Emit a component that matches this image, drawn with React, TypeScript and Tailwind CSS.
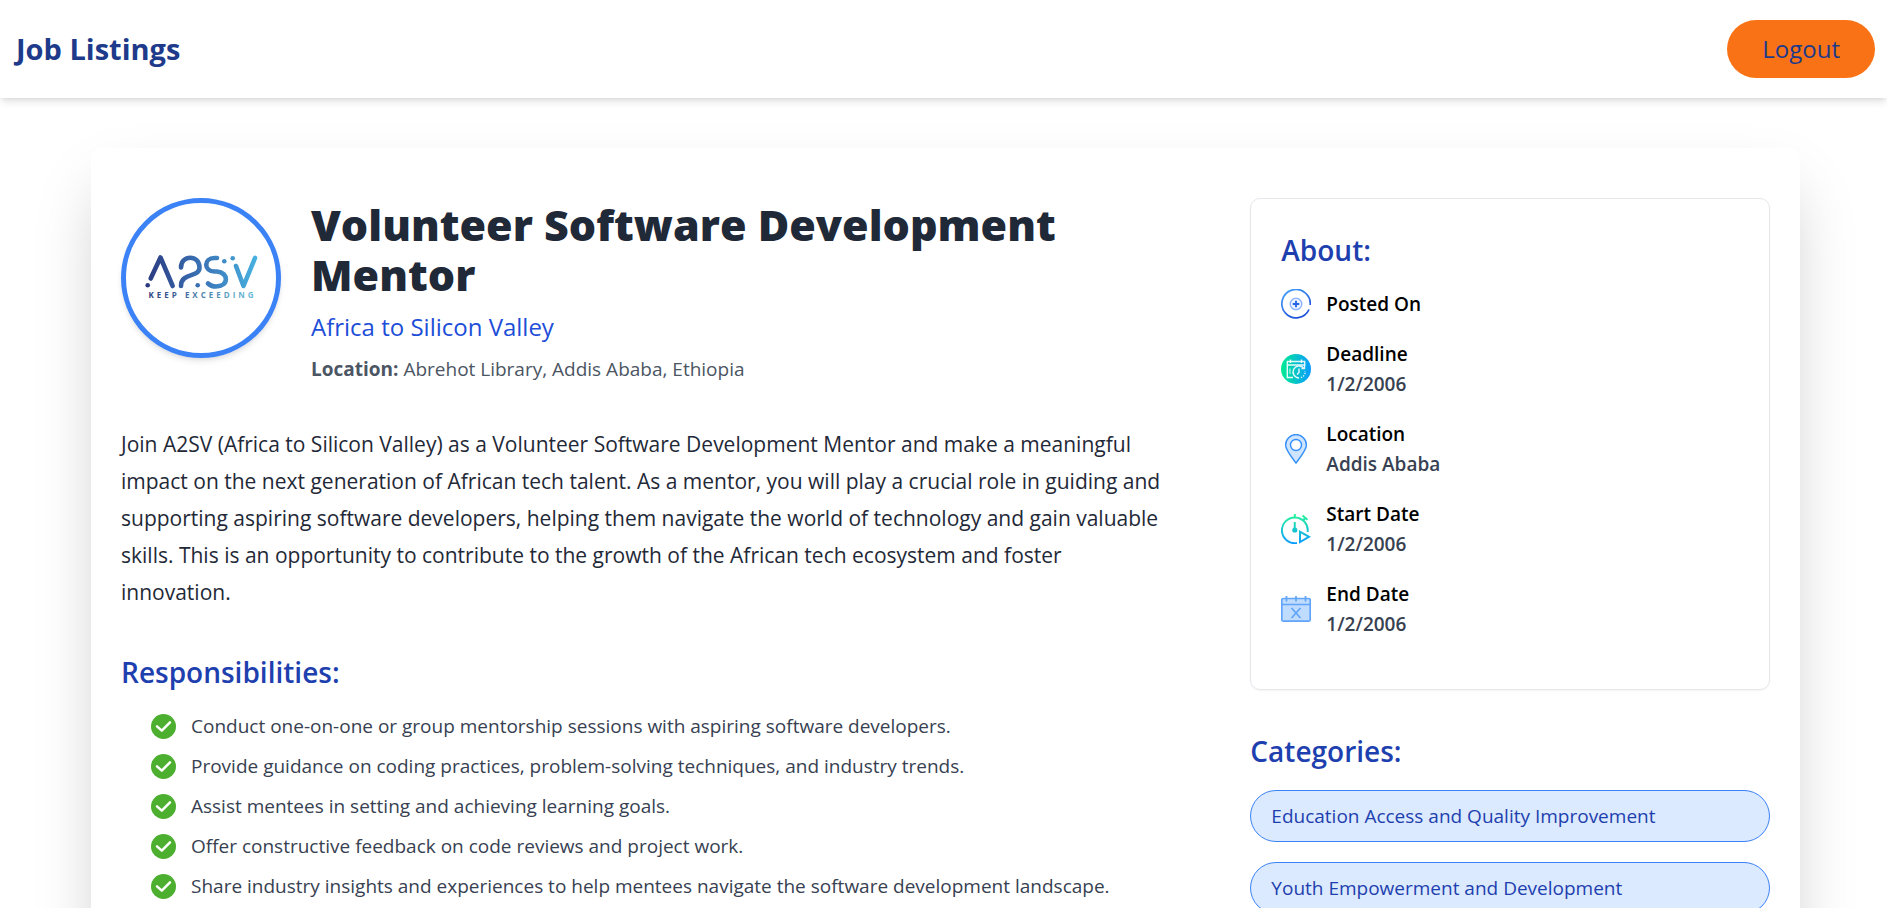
import React from "react";

const responsibilities = [
  "Conduct one-on-one or group mentorship sessions with aspiring software developers.",
  "Provide guidance on coding practices, problem-solving techniques, and industry trends.",
  "Assist mentees in setting and achieving learning goals.",
  "Offer constructive feedback on code reviews and project work.",
  "Share industry insights and experiences to help mentees navigate the software development landscape.",
];

const categories = [
  "Education Access and Quality Improvement",
  "Youth Empowerment and Development",
];

function OrganisationLogo() {
  return (
    <svg viewBox="0 0 150 150" className="h-full w-full" role="img" aria-label="A2SV">
      <defs>
        <linearGradient id="logo" gradientUnits="userSpaceOnUse" x1="20" y1="0" x2="130" y2="0">
          <stop offset="0" stopColor="#2b3a80" />
          <stop offset="0.5" stopColor="#3a72b5" />
          <stop offset="1" stopColor="#47b0e0" />
        </linearGradient>
        <linearGradient id="motto" gradientUnits="userSpaceOnUse" x1="20" y1="0" x2="130" y2="0">
          <stop offset="0" stopColor="#2b3a80" />
          <stop offset="0.5" stopColor="#4a80ac" />
          <stop offset="1" stopColor="#6fc0dc" />
        </linearGradient>
      </defs>
      <g fill="none" stroke="url(#logo)" strokeWidth="4.600" strokeLinecap="round" strokeLinejoin="round">
        <path d="M24.700 75.500L34.500 54.500L46.700 83" />
        <path d="M55 64.500C55 51.500 73.500 51.500 73.500 64.500C73.500 75 55 69 55 83" />
        <path d="M91 55H88.500C77.500 55 77.500 68.500 88.500 68.500H91C103 69.500 103 83.500 90 83.500C86 83.500 84 82.500 82 80.500" />
        <path d="M110 63L117.500 83L129 55" />
      </g>
      <g fill="url(#logo)">
        <circle cx="21.700" cy="82.300" r="2.300" />
        <circle cx="71.700" cy="82.300" r="2.300" />
        <circle cx="98.300" cy="58.300" r="2.300" />
        <circle cx="106.700" cy="55.300" r="2.300" />
      </g>
      <text x="22.500" y="94.500" fontSize="8" fontWeight="700" letterSpacing="3" fill="url(#motto)">
        KEEP EXCEEDING
      </text>
    </svg>
  );
}

function PostedIcon() {
  return (
    <svg viewBox="0 0 30 30" className="size-[30px] shrink-0" fill="none" aria-hidden="true">
      <defs>
        <linearGradient id="posted" x1="0" y1="0" x2="0.600" y2="1">
          <stop offset="0" stopColor="#45a5fb" />
          <stop offset="1" stopColor="#1d4fd8" />
        </linearGradient>
      </defs>
      <path d="M29.200 16A14.200 14.200 0 1 0 28 20.500" stroke="url(#posted)" strokeWidth="1.700" />
      <circle cx="15" cy="15" r="5.800" fill="#eef4ff" stroke="#8fb4f8" strokeWidth="1.400" />
      <path d="M15 11.700V18.300M11.700 15H18.300" stroke="#2563eb" strokeWidth="1.900" />
    </svg>
  );
}

function DeadlineIcon() {
  return (
    <svg viewBox="0 0 30 30" className="size-[30px] shrink-0" fill="none" aria-hidden="true">
      <defs>
        <linearGradient id="deadline" x1="0" y1="0" x2="1" y2="0">
          <stop offset="0" stopColor="#00eb92" />
          <stop offset="1" stopColor="#0a9bff" />
        </linearGradient>
      </defs>
      <circle cx="15" cy="15" r="15" fill="url(#deadline)" />
      <g stroke="#fff" strokeOpacity="0.900" strokeWidth="1.400">
        <path d="M12 23.500H6.300V7.500H23.700V12M6.300 11H23.700" />
        <path d="M9.500 5.500V9M20.500 5.500V9" />
        <path d="M9 14.500V20" strokeOpacity="0.600" />
        <path d="M22.500 14A6 6 0 1 0 18 24" />
        <path d="M20.500 14.500H23.500V11.500" />
        <path d="M18 14.500V18.500L16 20.500" />
        <path d="M20 23.700A6 6 0 0 0 24 17" strokeDasharray="1.200 1.400" />
      </g>
    </svg>
  );
}

function LocationIcon() {
  return (
    <svg viewBox="0 0 30 30" className="size-[30px] shrink-0" fill="none" aria-hidden="true">
      <path
        fillRule="evenodd"
        d="M15 29.200C12 24.500 4.600 16.500 4.600 11A10.400 10.400 0 0 1 25.400 11C25.400 16.500 18 24.500 15 29.200ZM15 16.500A5.500 5.500 0 1 0 15 5.500A5.500 5.500 0 1 0 15 16.500Z"
        fill="#cfe4ff"
        stroke="#3490fb"
        strokeWidth="1.400"
        strokeLinejoin="round"
      />
    </svg>
  );
}

function StartIcon() {
  return (
    <svg viewBox="0 0 30 30" className="size-[30px] shrink-0" fill="none" aria-hidden="true">
      <defs>
        <linearGradient id="start" gradientUnits="userSpaceOnUse" x1="0" y1="0" x2="0" y2="30">
          <stop offset="0" stopColor="#2af598" />
          <stop offset="1" stopColor="#0a9cff" />
        </linearGradient>
      </defs>
      <g stroke="url(#start)" strokeWidth="2">
        <path d="M16 29A12.900 12.900 0 1 1 26.600 18" />
        <path d="M13.800 0V4M21.500 1.500L26.500 5.800M22 6.500L25 3.300" />
        <path d="M13.750 8V14L14 14.100" />
        <path d="M19 17.700V28L28 22.800Z" />
      </g>
      <circle cx="13.800" cy="16" r="2.600" fill="url(#start)" />
    </svg>
  );
}

function EndIcon() {
  return (
    <svg viewBox="0 0 30 30" className="size-[30px] shrink-0" fill="none" aria-hidden="true">
      <g stroke="#60a5fa" strokeWidth="1.700">
        <rect x="0.800" y="4.500" width="28.400" height="22.700" rx="1.500" fill="#bfdbfe" />
        <path d="M0.800 10.500H29.200M5.500 2V7.500M15 2V7.500M24.500 2V7.500M10.500 14L19.500 24M19.500 14L10.500 24" />
      </g>
    </svg>
  );
}

function CheckIcon() {
  return (
    <svg viewBox="0 0 25 25" className="size-[25px] shrink-0" fill="none" aria-hidden="true">
      <circle cx="12.500" cy="12.500" r="12.500" fill="#4caf2f" />
      <path d="M6 12.300L10.800 16.700L19 8.300" stroke="#fff" strokeWidth="2.500" strokeLinecap="round" strokeLinejoin="round" />
    </svg>
  );
}

const facts = [
  { label: "Posted On", value: "", icon: <PostedIcon /> },
  { label: "Deadline", value: "1/2/2006", icon: <DeadlineIcon /> },
  { label: "Location", value: "Addis Ababa", icon: <LocationIcon /> },
  { label: "Start Date", value: "1/2/2006", icon: <StartIcon /> },
  { label: "End Date", value: "1/2/2006", icon: <EndIcon /> },
];

function SectionHeading({ children }: { children: React.ReactNode }) {
  return <h2 className="mb-[18px] text-[28px] leading-[42px] font-semibold text-[#1e40af]">{children}</h2>;
}

export default function App() {
  return (
    <div className="h-screen overflow-hidden bg-white font-['Open_Sans',sans-serif] text-black">
      <header className="relative z-10 flex items-center justify-between bg-white py-5 pr-3 pl-4 shadow-[0_5px_8px_-1px_rgba(0,0,0,0.1),0_2px_5px_-2px_rgba(0,0,0,0.1)]">
        <h1 className="text-[29px] leading-[42px] font-bold text-[#1e3a8a]">Job Listings</h1>
        <button type="button" className="rounded-full bg-[#f97316] px-[35px] py-[10px] text-2xl leading-[38px] text-[#1e3a8a]">
          Logout
        </button>
      </header>

      <div className="pt-[50px] pr-[87px] pl-[91px]">
        <main className="flex rounded-[10px] bg-white px-[30px] py-[50px] shadow-[0_31px_62px_-15px_rgba(0,0,0,0.25)]">
          <article className="w-2/3 pr-[55px]">
            <div className="flex items-start">
              <div className="mr-[30px] size-40 shrink-0 overflow-hidden rounded-full border-[5px] border-[#3b82f6] shadow-md">
                <OrganisationLogo />
              </div>
              <div className="pt-0.5">
                <h2 className="text-[43px] leading-[50px] font-extrabold text-[#1f2937]">Volunteer Software Development Mentor</h2>
                <p className="mt-2 text-2xl leading-[38px] text-[#1d4ed8]">Africa to Silicon Valley</p>
                <p className="mt-2 text-[19px] leading-[30px] text-[#4b5563]">
                  <strong className="font-bold">Location:</strong> Abrehot Library, Addis Ababa, Ethiopia
                </p>
              </div>
            </div>

            <p className="mt-[42px] text-[21px] leading-[37px] text-[#1f2937]">
              Join A2SV (Africa to Silicon Valley) as a Volunteer Software Development Mentor and make a meaningful impact on the
              next generation of African tech talent. As a mentor, you will play a crucial role in guiding and supporting aspiring
              software developers, helping them navigate the world of technology and gain valuable skills. This is an opportunity
              to contribute to the growth of the African tech ecosystem and foster innovation.
            </p>

            <section className="mt-10">
              <SectionHeading>Responsibilities:</SectionHeading>
              <ul className="flex flex-col gap-[10px] pl-[30px]">
                {responsibilities.map((text) => (
                  <li key={text} className="flex items-center gap-[15px] text-[19px] leading-[30px] text-[#374151]">
                    <CheckIcon />
                    <span>{text}</span>
                  </li>
                ))}
              </ul>
            </section>
          </article>

          <aside className="w-1/3 pl-[30px]">
            <section className="mb-10 rounded-[10px] border border-[#e5e7eb] p-[30px] shadow-[0_1px_2px_0_rgba(0,0,0,0.05)]">
              <SectionHeading>About:</SectionHeading>
              <ul>
                {facts.map(({ label, value, icon }) => (
                  <li key={label} className="mb-5 flex items-center gap-[15px] text-[19px] leading-[30px] font-semibold">
                    {icon}
                    <div>
                      <p>{label}</p>
                      {value && <p className="text-[#374151]">{value}</p>}
                    </div>
                  </li>
                ))}
              </ul>
            </section>

            <section>
              <SectionHeading>Categories:</SectionHeading>
              <ul className="flex flex-col gap-5">
                {categories.map((name) => (
                  <li
                    key={name}
                    className="rounded-full border border-[#3b82f6] bg-[#dbeafe] px-5 py-[10px] text-[19px] leading-[30px] text-[#1e40af]"
                  >
                    {name}
                  </li>
                ))}
              </ul>
            </section>
          </aside>
        </main>
      </div>
    </div>
  );
}
